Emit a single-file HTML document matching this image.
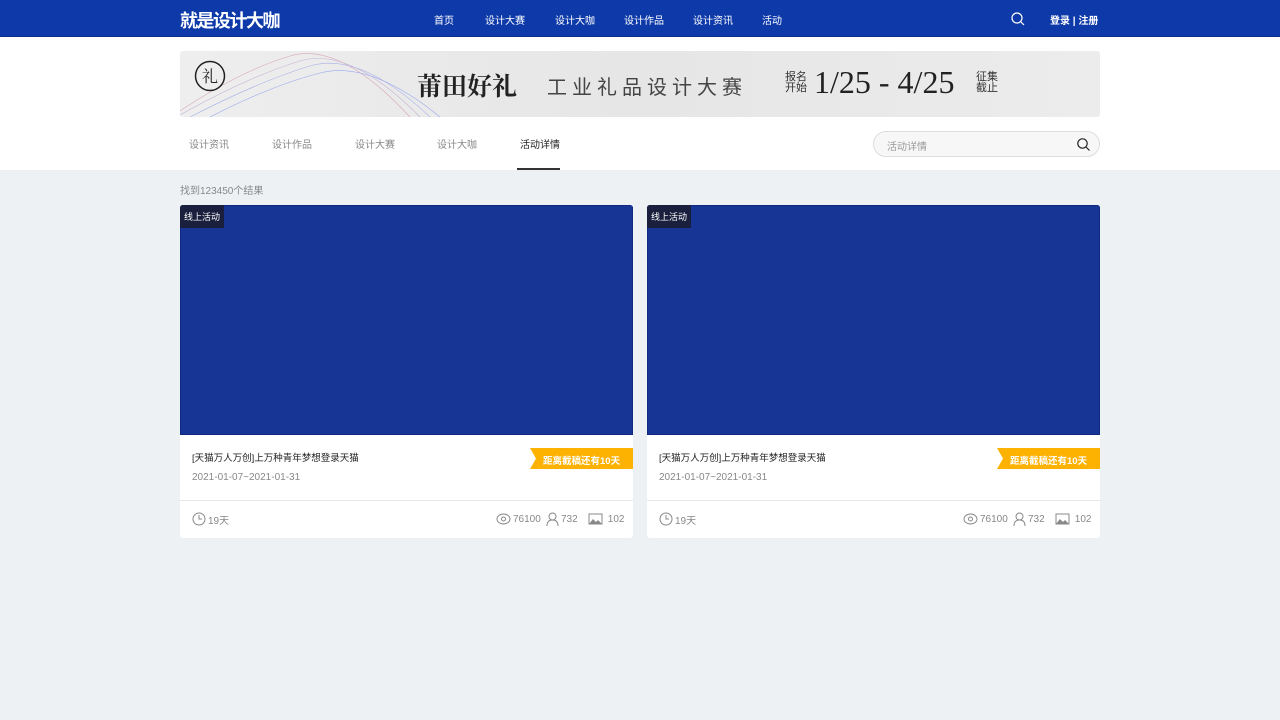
<!DOCTYPE html>
<html><head><meta charset="utf-8"><style>
*{margin:0;padding:0;box-sizing:border-box}
body{width:1280px;height:720px;background:#eef1f4;font-family:"Liberation Sans","Noto Sans CJK SC",sans-serif;position:relative;overflow:hidden}
.hdr{position:absolute;left:0;top:0;width:1280px;height:37px;background:#0e3aa9;border-bottom:1px solid #0a2c8a}
.logo{position:absolute;left:180px;top:7px;color:#fff;font-size:18px;font-weight:bold;letter-spacing:-1.5px}
.nav a{position:absolute;top:12px;color:#fff;font-size:10px;text-decoration:none}
.white{position:absolute;left:0;top:37px;width:1280px;height:133px;background:#fff}
.banner{position:absolute;left:180px;top:51px;width:920px;height:66px;border-radius:3px;background:linear-gradient(90deg,#eee,#e6e6e6 50%,#ececec);overflow:hidden}
.tab{position:absolute;top:136px;font-size:10px;color:#888}
.search{position:absolute;left:873px;top:131px;width:227px;height:26px;border:1px solid #ddd;border-radius:13px;background:#f7f7f7;font-size:10px;color:#999;padding:6px 0 0 13px}
.card{position:absolute;top:205px;width:453px;height:333px;background:#fff;border-radius:3px;overflow:hidden}
.img{height:230px;background:#163594;border:1px solid #0f2a80}
.tag{position:absolute;left:0;top:0;background:#1a1f3d;color:#fff;font-size:9px;padding:5px 4px}
.tt{position:absolute;left:12px;top:245px;font-size:9.5px;color:#222}
.dt{position:absolute;left:12px;top:267px;font-size:10px;color:#888}
.rib{position:absolute;right:0;top:243px;width:103px;height:21px;background:#fdb100;color:#fff;font-size:9.5px;font-weight:bold;padding:5px 0 0 13px;clip-path:polygon(0 0,100% 0,100% 100%,0 100%,6px 50%)}
.ln{position:absolute;left:0;top:295px;width:453px;height:1px;background:#e6e6e6}
.ft{position:absolute;top:307px;height:14px;font-size:10px;color:#888;display:flex;align-items:center;gap:2px}
</style></head><body>
<div class="hdr"><div class="logo">就是设计大咖</div>
<div class="nav"><a style="left:434px">首页</a><a style="left:485px">设计大赛</a><a style="left:555px">设计大咖</a><a style="left:624px">设计作品</a><a style="left:693px">设计资讯</a><a style="left:762px">活动</a></div>
<svg style="position:absolute;left:1011px;top:12px" width="14" height="14"><circle cx="6" cy="6" r="5" fill="none" stroke="#fff" stroke-width="1.2"/><path d="M10 10l3 3" stroke="#fff" stroke-width="1.2"/></svg>
<div style="position:absolute;left:1050px;top:12px;color:#fff;font-size:10px;font-weight:bold">登录 | 注册</div></div>
<div class="white"></div>
<div class="banner">
<svg width="300" height="66" style="position:absolute;left:0;top:0"><g fill="none" stroke-width="0.6"><path d="M0 60Q60 20 110 5T230 66" stroke="#d8a8b8"/><path d="M0 64Q70 25 120 10T240 66" stroke="#c6b3d3"/><path d="M10 66Q80 30 130 15T250 66" stroke="#a8b0e8"/><path d="M30 66Q90 35 140 22T260 66" stroke="#9aa8ee"/></g></svg>
<svg style="position:absolute;left:14px;top:9px" width="32" height="32"><circle cx="16" cy="16" r="14.5" fill="none" stroke="#222" stroke-width="1.5"/><text x="16" y="22" font-size="16" text-anchor="middle" fill="#222" font-family="Noto Serif CJK SC,serif">礼</text></svg>
<div style="position:absolute;left:237px;top:16px;font-size:25px;font-weight:bold;color:#222;font-family:'Noto Serif CJK SC',serif">莆田好礼</div>
<div style="position:absolute;left:367px;top:20px;font-size:20px;color:#444;letter-spacing:5px">工业礼品设计大赛</div>
<div style="position:absolute;left:605px;top:21px;font-size:11px;line-height:11px;color:#333">报名<br>开始</div>
<div style="position:absolute;left:634px;top:13px;font-size:32px;color:#222;font-family:'Liberation Serif',serif">1/25 - 4/25</div>
<div style="position:absolute;left:796px;top:21px;font-size:11px;line-height:11px;color:#333">征集<br>截止</div>
</div>
<div class="tab" style="left:189px">设计资讯</div><div class="tab" style="left:272px">设计作品</div><div class="tab" style="left:355px">设计大赛</div><div class="tab" style="left:437px">设计大咖</div><div class="tab" style="left:520px;color:#222">活动详情</div>
<div style="position:absolute;left:517px;top:168px;width:43px;height:2px;background:#333"></div>
<div class="search">活动详情<svg style="position:absolute;right:9px;top:6px" width="13" height="13"><circle cx="5.5" cy="5.5" r="4.7" fill="none" stroke="#222" stroke-width="1.2"/><path d="M9 9l3.5 3.5" stroke="#222" stroke-width="1.2"/></svg></div>
<div style="position:absolute;left:180px;top:182px;font-size:10px;color:#888">找到123450个结果</div>
<div class="card" style="left:180px"><div class="img"></div><div class="tag">线上活动</div><div class="tt">[天猫万人万创]上万种青年梦想登录天猫</div><div class="dt">2021-01-07~2021-01-31</div><div class="rib">距离截稿还有10天</div><div class="ln"></div>
<div class="ft" style="left:12px"><svg width="14" height="14"><circle cx="7" cy="7" r="6" fill="none" stroke="#888"/><path d="M7 3v4h3" fill="none" stroke="#888"/></svg>19天</div>
<div class="ft" style="left:316px"><svg width="15" height="12"><ellipse cx="7.5" cy="6" rx="6.5" ry="5" fill="none" stroke="#888"/><circle cx="7.5" cy="6" r="2" fill="none" stroke="#888"/></svg>76100</div>
<div class="ft" style="left:366px"><svg width="13" height="14"><circle cx="6.5" cy="4.5" r="3.5" fill="none" stroke="#888"/><path d="M1 14q0-6 5.5-6t5.5 6" fill="none" stroke="#888"/></svg>732</div>
<div class="ft" style="left:408px"><svg width="15" height="12"><rect x="1" y="1" width="13" height="10" fill="none" stroke="#888"/><path d="M1 11l4-5 3 3 2-2 4 4z" fill="#888"/></svg>&nbsp;102</div></div>
<div class="card" style="left:647px"><div class="img"></div><div class="tag">线上活动</div><div class="tt">[天猫万人万创]上万种青年梦想登录天猫</div><div class="dt">2021-01-07~2021-01-31</div><div class="rib">距离截稿还有10天</div><div class="ln"></div>
<div class="ft" style="left:12px"><svg width="14" height="14"><circle cx="7" cy="7" r="6" fill="none" stroke="#888"/><path d="M7 3v4h3" fill="none" stroke="#888"/></svg>19天</div>
<div class="ft" style="left:316px"><svg width="15" height="12"><ellipse cx="7.5" cy="6" rx="6.5" ry="5" fill="none" stroke="#888"/><circle cx="7.5" cy="6" r="2" fill="none" stroke="#888"/></svg>76100</div>
<div class="ft" style="left:366px"><svg width="13" height="14"><circle cx="6.5" cy="4.5" r="3.5" fill="none" stroke="#888"/><path d="M1 14q0-6 5.5-6t5.5 6" fill="none" stroke="#888"/></svg>732</div>
<div class="ft" style="left:408px"><svg width="15" height="12"><rect x="1" y="1" width="13" height="10" fill="none" stroke="#888"/><path d="M1 11l4-5 3 3 2-2 4 4z" fill="#888"/></svg>&nbsp;102</div></div>
</body></html>
